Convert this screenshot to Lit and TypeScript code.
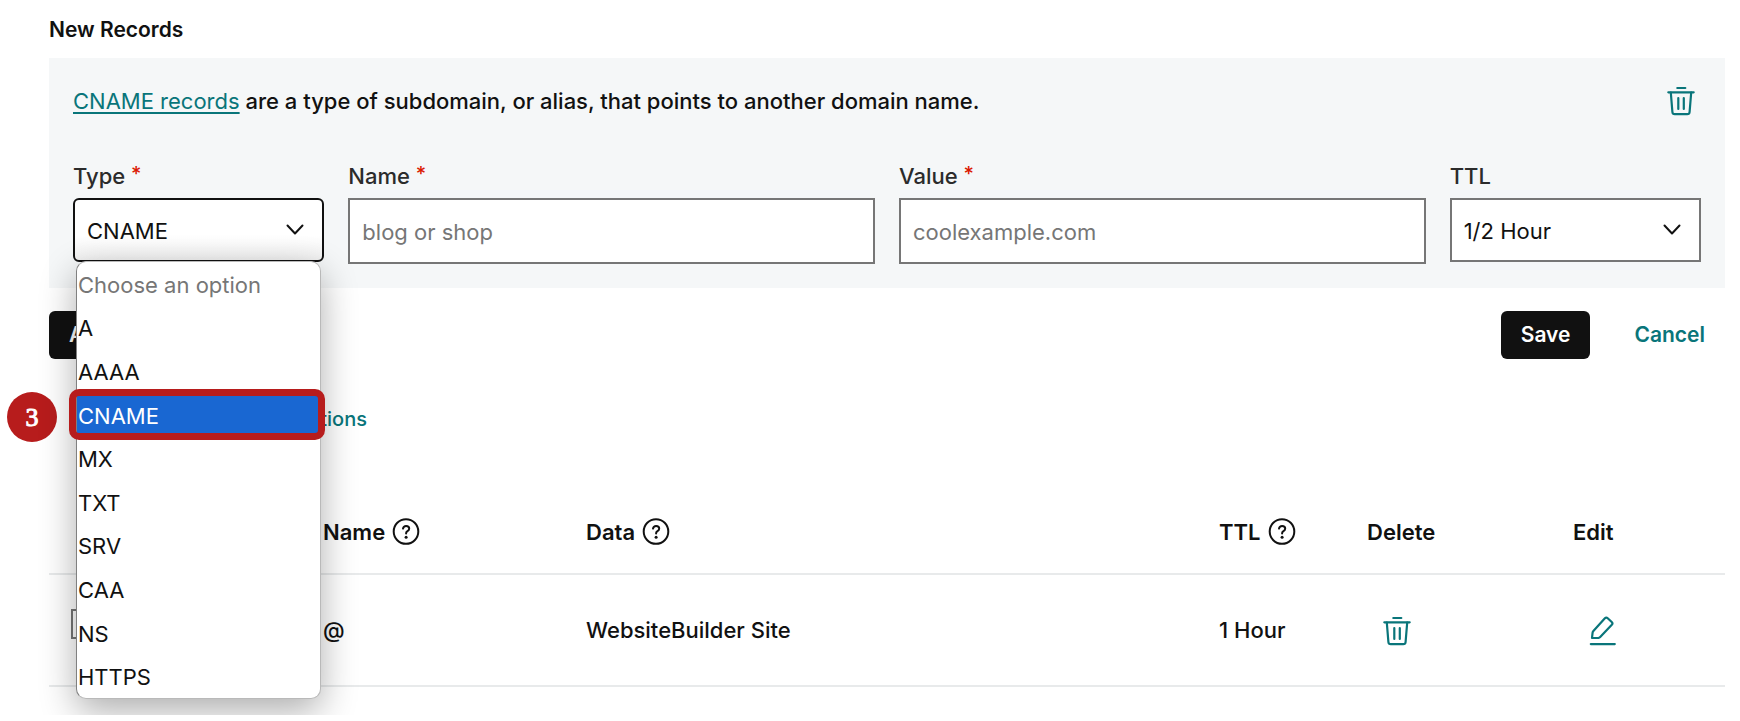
import { LitElement, html, css, svg, nothing } from "lit";
import { customElement, property, state } from "lit/decorators.js";
import { classMap } from "lit/directives/class-map.js";

const stroke = (body: unknown, w: number, h: number) => html`
  <svg width=${w} height=${h} viewBox="0 0 ${w} ${h}" fill="none" stroke="currentColor"
    stroke-width="2.2" stroke-linecap="round" stroke-linejoin="round" aria-hidden="true">${body}</svg>`;

const trashIcon = stroke(svg`
  <path d="M10.3 2h8" />
  <path d="M1.3 6.3h25.4" />
  <path d="M3.8 6.5l1.6 19.5a2.4 2.4 0 0 0 2.4 2.2h12.4a2.4 2.4 0 0 0 2.4-2.2l1.6-19.5" />
  <path d="M11.3 12v11M16.8 12v11" />`, 28, 30);

const pencilIcon = stroke(svg`
  <path d="M3 22l.6-5.4a3 3 0 0 1 .8-1.7L15.9 2.3a2 2 0 0 1 2.8-.1l4 3.8a2 2 0 0 1 .1 2.8L11.2 20.9a3 3 0 0 1-1.7.9z" />
  <path d="M1.8 28.1h24" />`, 28, 30);

const helpIcon = html`
  <svg width="28" height="28" viewBox="0 0 28 28" fill="none" stroke="currentColor"
    stroke-width="2" stroke-linecap="round" stroke-linejoin="round" aria-hidden="true">
    <circle cx="14" cy="13.5" r="12.3" />
    <path d="M11 10.6c.3-1.7 1.5-2.7 3.1-2.7 1.8 0 3.1 1.1 3.1 2.7 0 1.3-.7 2-1.7 2.6-.9.6-1.4 1-1.4 2v.4" />
    <circle cx="14.1" cy="19.2" r="1.5" fill="currentColor" stroke="none" />
  </svg>`;

@customElement("chevron-select")
class ChevronSelect extends LitElement {
  @property() label = "";
  @property() value = "";
  @property({ type: Array }) options: string[] = [];
  @property({ type: Boolean }) required = false;
  @property({ type: Boolean }) active = false;

  static styles = css`
    :host { display: block; }
    label { display: block; margin-bottom: 8px; line-height: 28px; font-weight: 500; color: #2b2b2b; }
    .star { color: #db1802; font-size: 20px; line-height: 0; vertical-align: 3px; }
    .box { display: grid; align-items: center; }
    select, svg { grid-area: 1 / 1; }
    select {
      appearance: none; box-sizing: border-box; width: 100%; height: 64px; margin: 0; padding: 2px 48px 0 12px;
      border: 2px solid #767676; border-radius: 0; background: #fff; color: #111;
      font: inherit; outline: none;
    }
    select.active { border-color: #111; border-radius: 6px; background: linear-gradient(#fff 60%, #f1f1f1); }
    svg { justify-self: end; margin-right: 20px; pointer-events: none; }
  `;

  render() {
    return html`
      <label for="control">${this.label}${this.required ? html` <span class="star">*</span>` : nothing}</label>
      <div class="box">
        <select id="control" class=${classMap({ active: this.active })} ?required=${this.required}>
          ${this.options.map((o) => html`<option ?selected=${o === this.value}>${o}</option>`)}
        </select>
        <svg width="18" height="12" viewBox="0 0 18 12" fill="none" stroke="#111" stroke-width="2"
          stroke-linecap="round" stroke-linejoin="round" aria-hidden="true">
          <path d="M1.5 1.5L9 9.5l7.5-8" />
        </svg>
      </div>`;
  }
}

const recordTypes = ["A", "AAAA", "CNAME", "MX", "TXT", "SRV", "CAA", "NS", "HTTPS"];

@customElement("app-root")
class AppRoot extends LitElement {
  @state() private type = "CNAME";

  static styles = css`
    :host {
      display: block; background: #fff; color: #111;
      font: 400 22px/28px Inter, "Liberation Sans", sans-serif;
    }
    * { box-sizing: border-box; }
    main { position: relative; overflow: hidden; padding: 16px 15px 28px 49px; }
    h2 { margin: 0 0 14px; font-size: 21px; line-height: 28px; font-weight: 600; }
    button { font: inherit; cursor: pointer; }

    .panel { padding: 28px 24px 24px; background: #f5f7f8; }
    .intro { display: flex; justify-content: space-between; align-items: center; height: 30px; margin-bottom: 46px; }
    .intro p { margin: 0; font-weight: 500; }
    .intro a { font-weight: 400; text-decoration-thickness: 2px; text-underline-offset: 3px; }
    .intro a, .text-button, .icon-button { color: #09757a; }
    .icon-button { display: inline-flex; padding: 0 6px; border: 0; background: none; }

    .fields { display: grid; grid-template-columns: repeat(6, 1fr); column-gap: 24px; align-items: start; }
    .wide { grid-column: span 2; }
    .type { position: relative; }
    .field label { display: block; margin-bottom: 8px; font-weight: 500; color: #2b2b2b; }
    .star { color: #db1802; font-size: 20px; line-height: 0; vertical-align: 3px; }
    .field input {
      display: block; width: 100%; height: 66px; margin: 0; padding: 2px 12px 0;
      border: 2px solid #767676; border-radius: 0; background: #fff; color: #111; font: inherit;
    }
    .field input::placeholder { color: #767676; opacity: 1; }

    .menu {
      position: absolute; z-index: 2; top: 99px; left: 3px; right: 3px; height: 438px;
      display: grid; grid-auto-rows: 1fr; margin: 0; padding: 0;
      border: 1px solid #b9b9b9; border-left-color: #808080; border-radius: 10px;
      background: #fff; box-shadow: 0 12px 36px rgba(0, 0, 0, .32);
    }
    .option { display: flex; align-items: center; padding: 2px 0 0 1px; border: 0; background: none; color: #111; text-align: left; }
    .option.hint { color: #767676; }
    .option.current { position: relative; background: #1967d2; color: #fff; }
    .ring {
      position: absolute; top: -4px; bottom: -4px; left: -8px; right: -5px;
      border: 7px solid #b71c1c; border-radius: 10px; pointer-events: none;
    }
    .step {
      position: absolute; top: 392px; left: 7px; display: grid; place-items: center; padding-top: 2px;
      width: 50px; height: 50px; border-radius: 50%; background: #b71c1c; color: #fff;
      font: 26px/28px "Liberation Serif", serif; -webkit-text-stroke: 1px #fff;
    }

    .actions { display: flex; align-items: center; gap: 24px; margin-top: 23px; font-size: 21px; font-weight: 600; }
    .primary { height: 48px; padding: 0 20px; border: 0; border-radius: 6px; background: #111; color: #fff; }
    .text-button { height: 48px; padding: 0 20px; border: 0; background: none; }
    .push { margin-left: auto; }
    .more { display: flex; justify-content: flex-end; width: 318px; height: 44px; margin: 38px 0 49px; }
    .more .text-button { height: 44px; padding: 0; font-size: 20px; font-weight: 500; white-space: nowrap; }

    table { width: 100%; table-layout: fixed; border-collapse: collapse; }
    th, td { padding: 0; text-align: left; border-bottom: 2px solid #e8eaeb; }
    th { height: 84px; font-weight: 600; }
    td { height: 112px; font-weight: 500; }
    .pick { width: 94px; padding-left: 22px; }
    .kind { width: 180px; }
    .name { width: 263px; }
    .ttl { width: 148px; }
    .delete { width: 206px; }
    .edit { width: 152px; }
    td .icon-button { padding: 0 16px; vertical-align: middle; }
    .head { display: flex; align-items: center; gap: 7px; }
    input[type="checkbox"] {
      display: block; appearance: none; width: 30px; height: 30px; margin: 0 0 12px;
      border: 2px solid #767676; background: #fff;
    }
  `;

  private option(label: string) {
    const current = label === this.type;
    return html`
      <button class=${classMap({ option: true, current })} role="option" aria-selected=${current}
        @click=${() => (this.type = label)}>
        ${label}${current ? html`<span class="ring"></span>` : nothing}
      </button>`;
  }

  render() {
    return html`
      <main>
        <h2>New Records</h2>
        <section class="panel">
          <div class="intro">
            <p><a href="#cname">CNAME records</a> are a type of subdomain, or alias, that points to another domain name.</p>
            <button class="icon-button" aria-label="Delete new record">${trashIcon}</button>
          </div>
          <div class="fields">
            <div class="type">
              <chevron-select label="Type" required active .value=${this.type} .options=${recordTypes}></chevron-select>
              <div class="menu" role="listbox" aria-label="Type">
                <button class="option hint" role="option" aria-selected="false" disabled>Choose an option</button>
                ${recordTypes.map((t) => this.option(t))}
              </div>
            </div>
            <div class="field wide">
              <label for="name">Name <span class="star">*</span></label>
              <input id="name" type="text" placeholder="blog or shop" required />
            </div>
            <div class="field wide">
              <label for="value">Value <span class="star">*</span></label>
              <input id="value" type="text" placeholder="coolexample.com" required />
            </div>
            <chevron-select label="TTL" value="1/2 Hour" .options=${["1/2 Hour", "1 Hour"]}></chevron-select>
          </div>
        </section>

        <div class="actions">
          <button class="primary">Add More</button>
          <button class="primary push">Save</button>
          <button class="text-button">Cancel</button>
        </div>
        <div class="more"><button class="text-button">Hide Record Actions</button></div>

        <table>
          <thead>
            <tr>
              <th class="pick"></th>
              <th class="kind">Type</th>
              <th class="name"><span class="head">Name ${helpIcon}</span></th>
              <th><span class="head">Data ${helpIcon}</span></th>
              <th class="ttl"><span class="head">TTL ${helpIcon}</span></th>
              <th class="delete">Delete</th>
              <th class="edit">Edit</th>
            </tr>
          </thead>
          <tbody>
            <tr>
              <td class="pick"><input type="checkbox" aria-label="Select record" /></td>
              <td>A</td>
              <td>@</td>
              <td>WebsiteBuilder Site</td>
              <td>1 Hour</td>
              <td><button class="icon-button" aria-label="Delete record">${trashIcon}</button></td>
              <td><button class="icon-button" aria-label="Edit record">${pencilIcon}</button></td>
            </tr>
          </tbody>
        </table>
        <span class="step">3</span>
      </main>`;
  }
}
